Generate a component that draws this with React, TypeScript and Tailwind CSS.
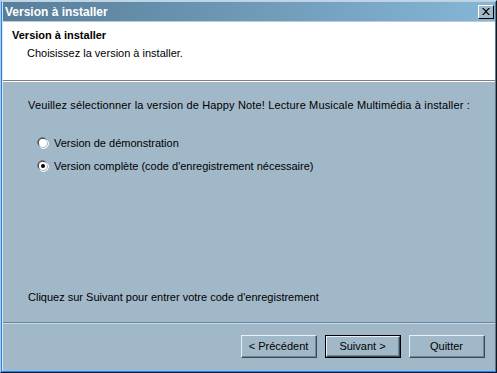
import React from "react";

const font = { fontFamily: '"Liberation Sans", Arial, sans-serif' };

function Radio({ checked }: { checked?: boolean }) {
  return (
    <svg width="12" height="12" viewBox="0 0 12 12" className="shrink-0">
      <path d="M1.5 8.5 A5 5 0 0 1 8.5 1.5" fill="none" stroke="#808080" strokeWidth="1" />
      <path d="M2.5 8.5 A4 4 0 0 1 8.5 2.5" fill="none" stroke="#404040" strokeWidth="1" />
      <path d="M3.5 10.5 A5 5 0 0 0 10.5 3.5" fill="none" stroke="#ffffff" strokeWidth="1" />
      <circle cx="6" cy="6" r="4" fill="#ffffff" />
      {checked && <circle cx="6" cy="6" r="2" fill="#000000" />}
    </svg>
  );
}

function Btn({ label, def }: { label: string; def?: boolean }) {
  const inner = (
    <div className="border-t border-l border-t-[#e8f0f6] border-l-[#e8f0f6] border-r border-b border-r-[#3c4a56] border-b-[#3c4a56] h-full">
      <div className="border-r border-b border-r-[#6f8799] border-b-[#6f8799] h-full flex items-center justify-center text-[11px] text-black bg-[#a0b8c8]">
        {label}
      </div>
    </div>
  );
  return (
    <div className={`w-[76px] h-[23px] ${def ? "border border-black" : ""}`}>{inner}</div>
  );
}

export default function App() {
  return (
    <div className="w-[497px] h-[373px] bg-[#a0b8c8]" style={font}>
      <div className="w-full h-full border-t border-l border-t-[#c0d6e4] border-l-[#b4cadb] border-r border-b border-r-[#101820] border-b-[#0a1a40] flex flex-col">
        <div className="flex-1 flex flex-col border-l border-t border-l-[#2184f4] border-t-[#bcd2e2] border-r border-b border-r-[#5f7a8e] border-b-[#2184f4]">
          <div className="flex-1 flex flex-col border-l border-l-[#d4e4f0]">
            {/* Title bar */}
            <div className="h-[19px] flex items-center justify-between pl-[2px] pr-[1px] bg-gradient-to-r from-[#587e9a] to-[#86b6d6]">
              <span className="text-white font-bold text-[12px] leading-none">Version à installer</span>
              <div className="w-[16px] h-[14px] bg-[#a0b8c8] border-t border-l border-t-white border-l-white border-r border-b border-r-black border-b-black flex items-center justify-center">
                <svg width="8" height="7" viewBox="0 0 8 7">
                  <path d="M0 0 L1.5 0 L4 2.5 L6.5 0 L8 0 L4.75 3.5 L8 7 L6.5 7 L4 4.5 L1.5 7 L0 7 L3.25 3.5 Z" fill="#000" />
                </svg>
              </div>
            </div>
            <div className="h-px bg-[#b8ccd8]" />
            {/* Header */}
            <div className="bg-white h-[58px] pl-[9px] pt-[7px]">
              <div className="font-bold text-[11px] leading-[13px] text-black">Version à installer</div>
              <div className="text-[11px] leading-[13px] text-black pl-[15px] mt-[5px]">Choisissez la version à installer.</div>
            </div>
            <div className="h-px bg-[#808080]" />
            <div className="h-px bg-white" />
            {/* Body */}
            <div className="flex-1 flex flex-col bg-[#a0b8c8]">
              <div className="flex-1 flex flex-col pl-[25px] pt-[17px] text-[11px] leading-[13px] text-black">
                <div className="tracking-[0.15px]">Veuillez sélectionner la version de Happy Note! Lecture Musicale Multimédia à installer :</div>
                <div className="flex flex-col gap-[7px] mt-[23px] pl-[9px]">
                  <div className="flex items-center gap-[5px] h-[16px]">
                    <Radio />
                    <span>Version de démonstration</span>
                  </div>
                  <div className="flex items-center gap-[5px] h-[16px]">
                    <Radio checked />
                    <span>Version complète (code d'enregistrement nécessaire)</span>
                  </div>
                </div>
                <div className="flex-1" />
                <div className="mb-[18px]">Cliquez sur Suivant pour entrer votre code d'enregistrement</div>
              </div>
              <div className="h-px bg-[#6886a0]" />
              <div className="h-px bg-[#cadce8]" />
              <div className="h-[47px] flex items-start justify-end gap-[8px] pr-[10px] pt-[11px]">
                <Btn label="< Précédent" />
                <Btn label="Suivant >" def />
                <Btn label="Quitter" />
              </div>
            </div>
          </div>
        </div>
      </div>
    </div>
  );
}
